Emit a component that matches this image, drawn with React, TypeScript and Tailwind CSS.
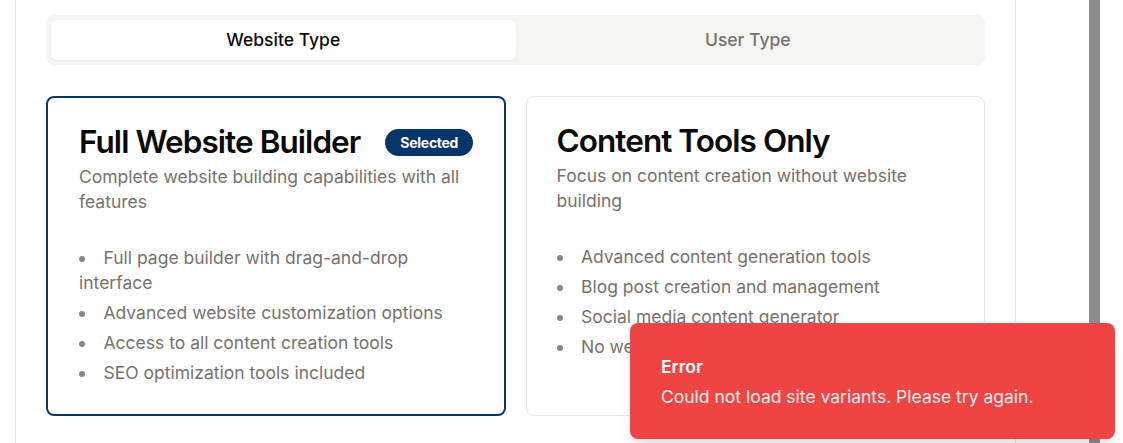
import React from 'react';

const fullFeatures = [
  'Full page builder with drag-and-drop interface',
  'Advanced website customization options',
  'Access to all content creation tools',
  'SEO optimization tools included',
];

const contentFeatures = [
  'Advanced content generation tools',
  'Blog post creation and management',
  'Social media content generator',
  'No website builder access',
];

const App = () => {
  return (
    <div
      className="relative flex h-[443px] w-[1123px] overflow-hidden bg-white"
      style={{ fontFamily: 'Inter, "Noto Sans", sans-serif' }}
    >
      {/* Main panel */}
      <div className="ml-[15px] flex w-[1001px] flex-col border-x border-[#e7e5e4] px-[30px] pt-[15px]">
        {/* Tabs */}
        <div className="grid h-[50px] grid-cols-2 rounded-lg bg-[#f5f5f4] p-[5px]">
          <button className="rounded-md bg-white text-[17.5px] font-medium text-[#0c0a09] shadow-[0_1px_2px_rgba(0,0,0,0.04)]">
            Website Type
          </button>
          <button className="rounded-md text-[17.5px] font-medium text-[#78716c]">User Type</button>
        </div>

        {/* Cards */}
        <div className="mt-[31px] grid grid-cols-2 gap-5">
          <div className="h-[320px] rounded-lg border-2 border-[#0b3767] px-[31px] pt-[27px]">
            <div className="flex items-center gap-[25px]">
              <h2 className="whitespace-nowrap text-[31.5px] font-semibold leading-[34px] tracking-[-0.03em] text-[#0c0a09]">
                Full Website Builder
              </h2>
              <span className="shrink-0 whitespace-nowrap rounded-full bg-[#06356a] px-[15px] py-[5px] text-[14px] font-bold leading-[17px] tracking-[-0.02em] text-white">
                Selected
              </span>
            </div>
            <p className="mt-[5px] text-[17.5px] leading-[25px] text-[#78716c]">
              Complete website building capabilities with all features
            </p>
            <ul className="mt-[31px] list-inside list-disc space-y-[5px] text-[17.5px] leading-[25px] text-[#78716c] marker:text-[#8a8580]">
              {fullFeatures.map((f) => (
                <li key={f}>{f}</li>
              ))}
            </ul>
          </div>

          <div className="h-[320px] rounded-lg border border-[#e7e5e4] px-[30px] pt-[27px]">
            <h2 className="text-[31.5px] font-semibold leading-[34px] tracking-[-0.03em] text-[#0c0a09]">
              Content Tools Only
            </h2>
            <p className="mt-[5px] text-[17.5px] leading-[25px] text-[#78716c]">
              Focus on content creation without website building
            </p>
            <ul className="mt-[31px] list-inside list-disc space-y-[5px] text-[17.5px] leading-[25px] text-[#78716c] marker:text-[#8a8580]">
              {contentFeatures.map((f) => (
                <li key={f}>{f}</li>
              ))}
            </ul>
          </div>
        </div>
      </div>

      {/* Scrollbar */}
      <div className="ml-[73px] h-full w-[11px] bg-[#8c8c8c]" />

      {/* Error toast */}
      <div className="absolute bottom-[4px] right-[8px] w-[485px] rounded-lg bg-[#ef4444] px-[31px] pb-[30px] pt-[32px] text-white shadow-lg">
        <div className="text-[17.5px] font-semibold leading-[24px]">Error</div>
        <div className="mt-[6px] text-[17.5px] leading-[24px] text-white/90">
          Could not load site variants. Please try again.
        </div>
      </div>
    </div>
  );
};

export default App;
